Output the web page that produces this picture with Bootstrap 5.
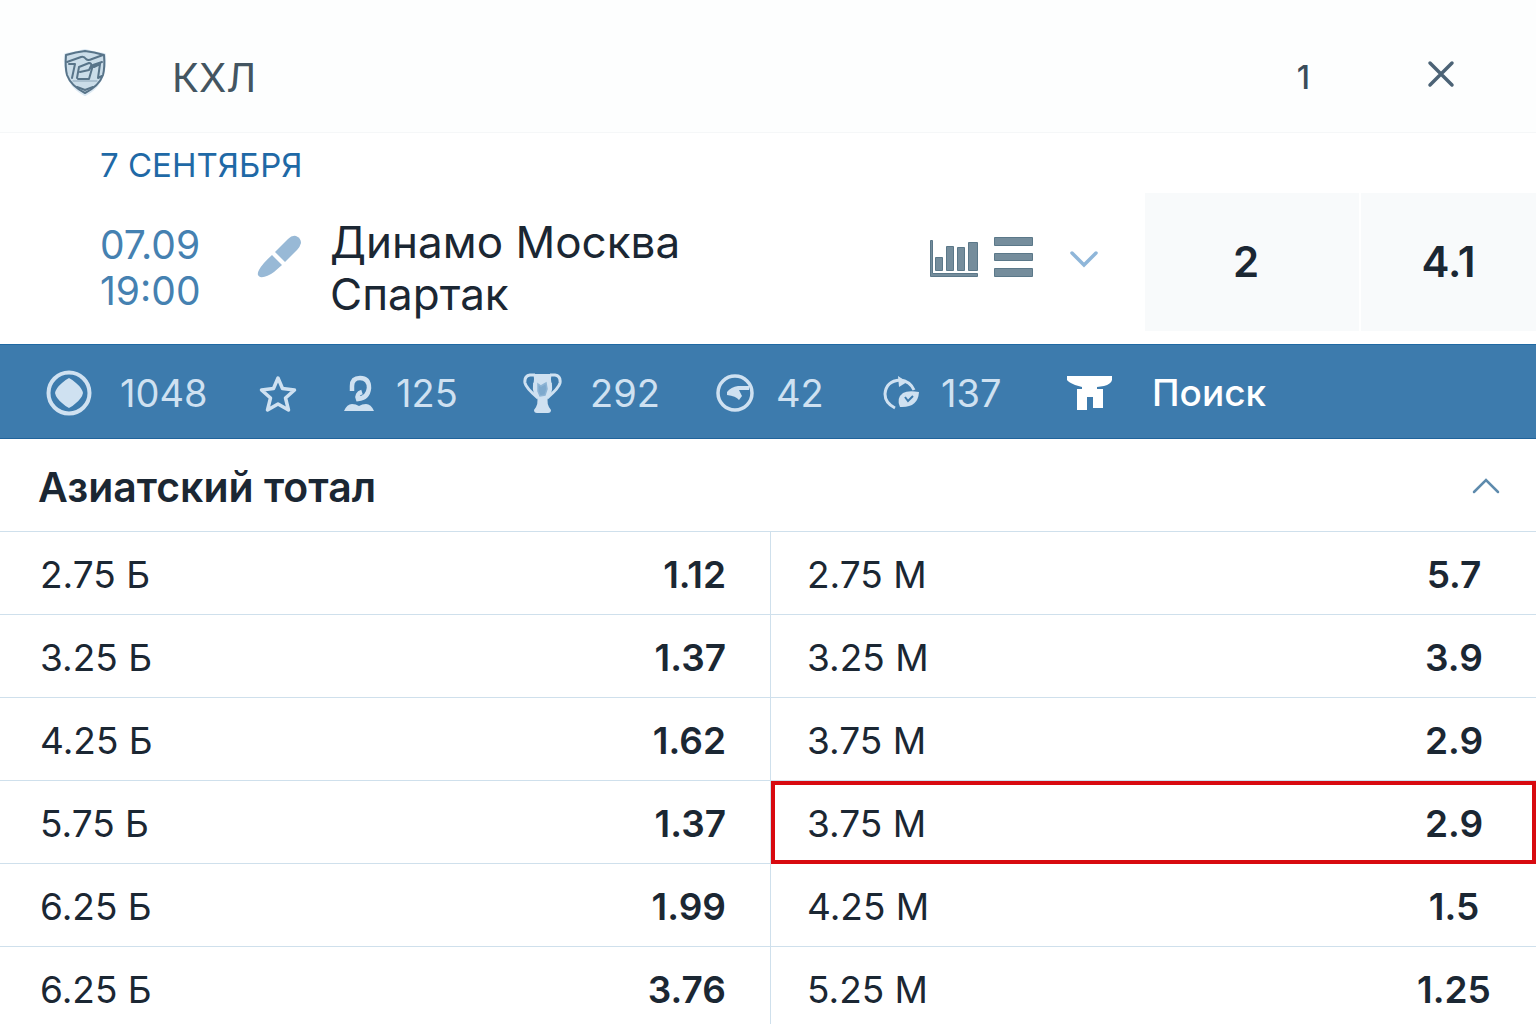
<!DOCTYPE html>
<html lang="ru">
<head>
<meta charset="utf-8">
<meta name="viewport" content="width=device-width, initial-scale=1">
<title>КХЛ — Динамо Москва — Спартак</title>
<link href="https://cdn.jsdelivr.net/npm/bootstrap@5.3.0/dist/css/bootstrap.min.css" rel="stylesheet">
<style>
  :root { --ink: #1b2733; --line: #cfe0ec; --blue: #3d7bad; --pale: #cfe1f1; }
  body { font-family: Inter, "Liberation Sans", sans-serif; color: var(--ink); background: #fff; overflow-x: hidden; }
  button { font-family: inherit; }
  svg { display: block; flex: none; }
  .plain-btn { background: none; border: 0; padding: 0; color: inherit; }

  .league-bar { background: #fdfefe; border-bottom: 1px solid #f5f7f8; padding: 46px 80px 30px 62px; color: #435561; }
  .league-name { font-size: 40px; line-height: 48px; font-weight: 400; margin-left: 64px; padding-top: 8px; }
  .league-count { font-size: 32px; line-height: 48px; color: #3b4c5a; margin-right: 116px; padding-top: 8px; font-weight: 500; }

  .day-title { font-size: 33px; line-height: 40px; font-weight: 400; color: #1f69a6; padding: 12px 0 8px 100px; }
  .match-line { padding-bottom: 13px; }
  .match-info { padding: 12px 46px 0 100px; }
  .match-time { font-size: 39px; line-height: 46px; color: #4581b1; width: 156px; }
  .match-teams { font-size: 44px; line-height: 52px; font-weight: 400; margin-left: 28px; }
  .match-tools { margin-bottom: 22px; }
  .tool-more { margin-left: 36px; padding-top: 4px; }
  .main-odds { gap: 2px; }
  .main-odd { background: #f8fafb; font-size: 42px; line-height: 50px; font-weight: 600; padding: 44px 12px 44px 0; width: 214px; }
  .main-odd-cut { width: 175px; padding-right: 0; }

  .market-tabs { display: grid; grid-template-columns: 213px 85px 179px 193px 167px 184px 1fr; background: var(--blue); color: var(--pale);
    border-top: 1px solid #2069a3; border-bottom: 1px solid #20639b; padding: 23px 0 21px 46px; }
  .market-tab { display: flex; align-items: center; gap: 22px; font-size: 38px; line-height: 48px; text-align: left; }
  .market-tab span { padding-top: 1px; }
  .tab-wide { gap: 28px; }
  .tab-search { gap: 40px; color: #fff; font-weight: 500; font-size: 37px; }

  .market-head { padding: 24px 36px 20px 38px; font-size: 41px; line-height: 48px; border-bottom: 1px solid var(--line); }
  .market-head h2 { font-size: inherit; line-height: inherit; font-weight: 600; }
  .odds-col { border-right: 1px solid var(--line); flex: 0 0 calc(50% + 3px); }
  .odd-line { display: flex; justify-content: space-between; align-items: center; width: 100%; font-size: 37px; line-height: 50px;
    padding: 18px 44px 14px 40px; border: 0; border-bottom: 1px solid var(--line); background: #fff; color: var(--ink); }
  .odd-line strong { font-weight: 600; }
  .odds-right .odd-line { padding-left: 36px; padding-right: 42px; }
  .odds-right strong { width: 80px; text-align: center; }
  .odds-right .odd-picked { outline: 4px solid #d80a10; outline-offset: -4px; }
</style>
</head>
<body>
<header class="league-bar d-flex align-items-center">
  <svg width="46" height="54" viewBox="0 0 46 54" fill="none" stroke="#587489" stroke-width="2" stroke-linejoin="round" stroke-linecap="round" role="img" aria-label="КХЛ">
    <path d="M4 8Q14 7 23 4Q32 7 42 8Q44 36 23 47Q2 36 4 8Z" fill="#dce9f3" stroke="#dce9f3" stroke-width="4"/>
    <path d="M4 8Q14 5 23 4Q32 5 42 8Q43 20 41 28Q37 39 23 46Q9 39 5 28Q3 20 4 8Z" fill="#cbdde9"/>
    <path d="M5 15L19 10Q22 9 24 12Q26 14 30 12L41 8M7 17H13L10 31M15 31L17 20L27 16Q30 16 29 19L27 23L18 25M16 32H27L31 18L40 15M32 20L38 17L36 31L40 29M15 40L23 43L31 40"/>
    <path d="M11 34H35" stroke="#8ba5b8" stroke-width="1"/>
  </svg>
  <h1 class="league-name mb-0">КХЛ</h1>
  <span class="league-count ms-auto">1</span>
  <button class="plain-btn" type="button" aria-label="Закрыть">
    <svg width="30" height="30" viewBox="0 0 30 30" stroke="#4c6376" stroke-width="3.500" stroke-linecap="round"><path d="M4 4L26 26M26 4L4 26"/></svg>
  </button>
</header>

<main>
  <h2 class="day-title mb-0">7 СЕНТЯБРЯ</h2>
  <section class="match-line d-flex">
    <div class="match-info d-flex align-items-center flex-grow-1">
      <div class="match-time">07.09<br>19:00</div>
      <svg class="mb-4" width="46" height="46" viewBox="0 0 46 46" fill="#98b9d6">
        <path d="M19 19L32 6Q36 2 40 3Q45 5 45 10Q44 14 41 17L29 29Z"/>
        <path d="M16 22L26 32L18 39Q10 45 4 44Q0 42 3 37Q6 31 16 22Z"/>
      </svg>
      <div class="match-teams">Динамо Москва<br>Спартак</div>
      <div class="match-tools d-flex align-items-center ms-auto">
        <button class="plain-btn me-3" type="button" aria-label="Статистика">
          <svg width="48" height="40" viewBox="0 0 48 40" fill="#758d9c" stroke="#5b7889">
            <path d="M.5 3.5H2.500V36.500H47.500V39.500H.5ZM5.500 20.500H12.500V33.500H5.500ZM16.500 9.500H23.500V33.500H16.500ZM27.500 10.500H34.500V33.500H27.500ZM38.500 5.500H47.500V33.500H38.500Z"/>
          </svg>
        </button>
        <button class="plain-btn" type="button" aria-label="Список">
          <svg width="39" height="40" viewBox="0 0 39 40" fill="#758d9c" stroke="#5b7889"><path d="M.5 .5H38.500V8.500H.5ZM.5 16.500H38.500V23.500H.5ZM.5 31.500H38.500V39.500H.5Z"/></svg>
        </button>
        <button class="plain-btn tool-more" type="button" aria-label="Развернуть">
          <svg width="30" height="20" viewBox="0 0 30 20" fill="none" stroke="#8fb6d9" stroke-width="3.500" stroke-linecap="round"><path d="M3 4L15 16L27 4"/></svg>
        </button>
      </div>
    </div>
    <div class="main-odds d-flex flex-shrink-0">
      <button class="plain-btn main-odd" type="button">2</button>
      <button class="plain-btn main-odd main-odd-cut" type="button">4.1</button>
    </div>
  </section>

  <nav class="market-tabs" aria-label="Рынки">
    <button class="plain-btn market-tab tab-wide" type="button">
      <svg width="46" height="46" viewBox="0 0 46 46" fill="none" stroke="currentColor" stroke-width="4"><circle cx="23" cy="23" r="20.500"/><path d="M23 8Q27 10 30 13Q36 18 37 23Q36 28 30 33Q27 36 23 38Q19 36 16 33Q10 28 9 23Q10 18 16 13Q19 10 23 8Z" fill="currentColor" stroke="none"/></svg>
      <span>1048</span>
    </button>
    <button class="plain-btn market-tab" type="button" aria-label="Избранное">
      <svg width="38" height="40" viewBox="0 0 38 40" fill="none" stroke="currentColor" stroke-width="3.500" stroke-linejoin="round"><path d="M19 5L23.500 15.500L35.500 17L26.500 25L29.500 37L19 31L8.500 37L11.500 25L2.500 17L14.500 15.500Z"/></svg>
    </button>
    <button class="plain-btn market-tab" type="button">
      <svg width="30" height="38" viewBox="0 0 30 38" fill="none" stroke="currentColor" stroke-width="4.500"><path d="M8 17V12Q8 4 16 4Q25 4 25 14Q24 24 14 25Q12 20 18 18"/><path d="M0 37Q3 30 8 30Q12 30 15 32Q18 30 22 30Q27 30 30 37Z" fill="currentColor" stroke="none"/></svg>
      <span>125</span>
    </button>
    <button class="plain-btn market-tab tab-wide" type="button">
      <svg width="39" height="40" viewBox="0 0 39 40" fill="none" stroke="currentColor" stroke-width="3"><path d="M12 2H7Q1 3 2 10Q3 15 15 25M27 2H32Q38 3 37 10Q36 15 24 25M12 2Q15 7 11 12M27 2Q24 7 28 12"/><path d="M10 1H29Q27 5 29 12Q30 20 25 24Q23 31 28 37Q28 40 25 40H14Q11 40 11 37Q16 31 14 24Q9 20 10 12Q12 5 10 1Z" fill="currentColor" stroke="none"/><path d="M15 11L18 13L23 10L24 16L22 22L17 23L15 18Z" fill="#7ea9cd" stroke="#8db4d5" stroke-width="1.500"/></svg>
      <span>292</span>
    </button>
    <button class="plain-btn market-tab" type="button">
      <svg width="38" height="38" viewBox="0 0 38 38" fill="none" stroke="currentColor" stroke-width="3.500"><circle cx="19" cy="19" r="17"/><path d="M11 18Q15 13 22 12H33V16H23L26 22L23 26Q20 22 11 21Z" fill="currentColor" stroke="none"/></svg>
      <span>42</span>
    </button>
    <button class="plain-btn market-tab" type="button">
      <svg width="36" height="36" viewBox="0 0 36 36" fill="none" stroke="currentColor" stroke-width="3"><path d="M12 33Q2 28 2 19Q3 6 17 5Q27 6 31 15"/><path d="M15 1L24 7L16 12Z" fill="currentColor" stroke="none"/><path d="M36 17Q35 33 17 32Q13 23 20 18Q25 15 36 17Z" fill="currentColor" stroke="none"/><path d="M22 22L25 26L30 21" stroke="#3d7bad" stroke-width="2"/></svg>
      <span>137</span>
    </button>
    <button class="plain-btn market-tab tab-search" type="button">
      <svg width="45" height="36" viewBox="0 0 45 36" fill="currentColor"><path d="M0 1H45V5Q44 9 37 11L30 12V14H36V33H26V22H20V35H10V14H15V12L8 10Q1 7 0 5Z"/></svg>
      <span>Поиск</span>
    </button>
  </nav>

  <section>
    <div class="market-head d-flex align-items-center justify-content-between">
      <h2 class="mb-0">Азиатский тотал</h2>
      <button class="plain-btn" type="button" aria-label="Свернуть">
        <svg width="28" height="18" viewBox="0 0 28 18" fill="none" stroke="#5e8bad" stroke-width="2.500" stroke-linecap="round"><path d="M2 14L14 2L26 14"/></svg>
      </button>
    </div>
    <div class="d-flex">
      <div class="odds-col">
        <button class="odd-line" type="button"><span>2.75 Б</span><strong>1.12</strong></button>
        <button class="odd-line" type="button"><span>3.25 Б</span><strong>1.37</strong></button>
        <button class="odd-line" type="button"><span>4.25 Б</span><strong>1.62</strong></button>
        <button class="odd-line" type="button"><span>5.75 Б</span><strong>1.37</strong></button>
        <button class="odd-line" type="button"><span>6.25 Б</span><strong>1.99</strong></button>
        <button class="odd-line" type="button"><span>6.25 Б</span><strong>3.76</strong></button>
      </div>
      <div class="odds-right flex-grow-1">
        <button class="odd-line" type="button"><span>2.75 М</span><strong>5.7</strong></button>
        <button class="odd-line" type="button"><span>3.25 М</span><strong>3.9</strong></button>
        <button class="odd-line" type="button"><span>3.75 М</span><strong>2.9</strong></button>
        <button class="odd-line odd-picked" type="button"><span>3.75 М</span><strong>2.9</strong></button>
        <button class="odd-line" type="button"><span>4.25 М</span><strong>1.5</strong></button>
        <button class="odd-line" type="button"><span>5.25 М</span><strong>1.25</strong></button>
      </div>
    </div>
  </section>
</main>
<script src="https://cdn.jsdelivr.net/npm/bootstrap@5.3.0/dist/js/bootstrap.bundle.min.js"></script>
</body>
</html>
